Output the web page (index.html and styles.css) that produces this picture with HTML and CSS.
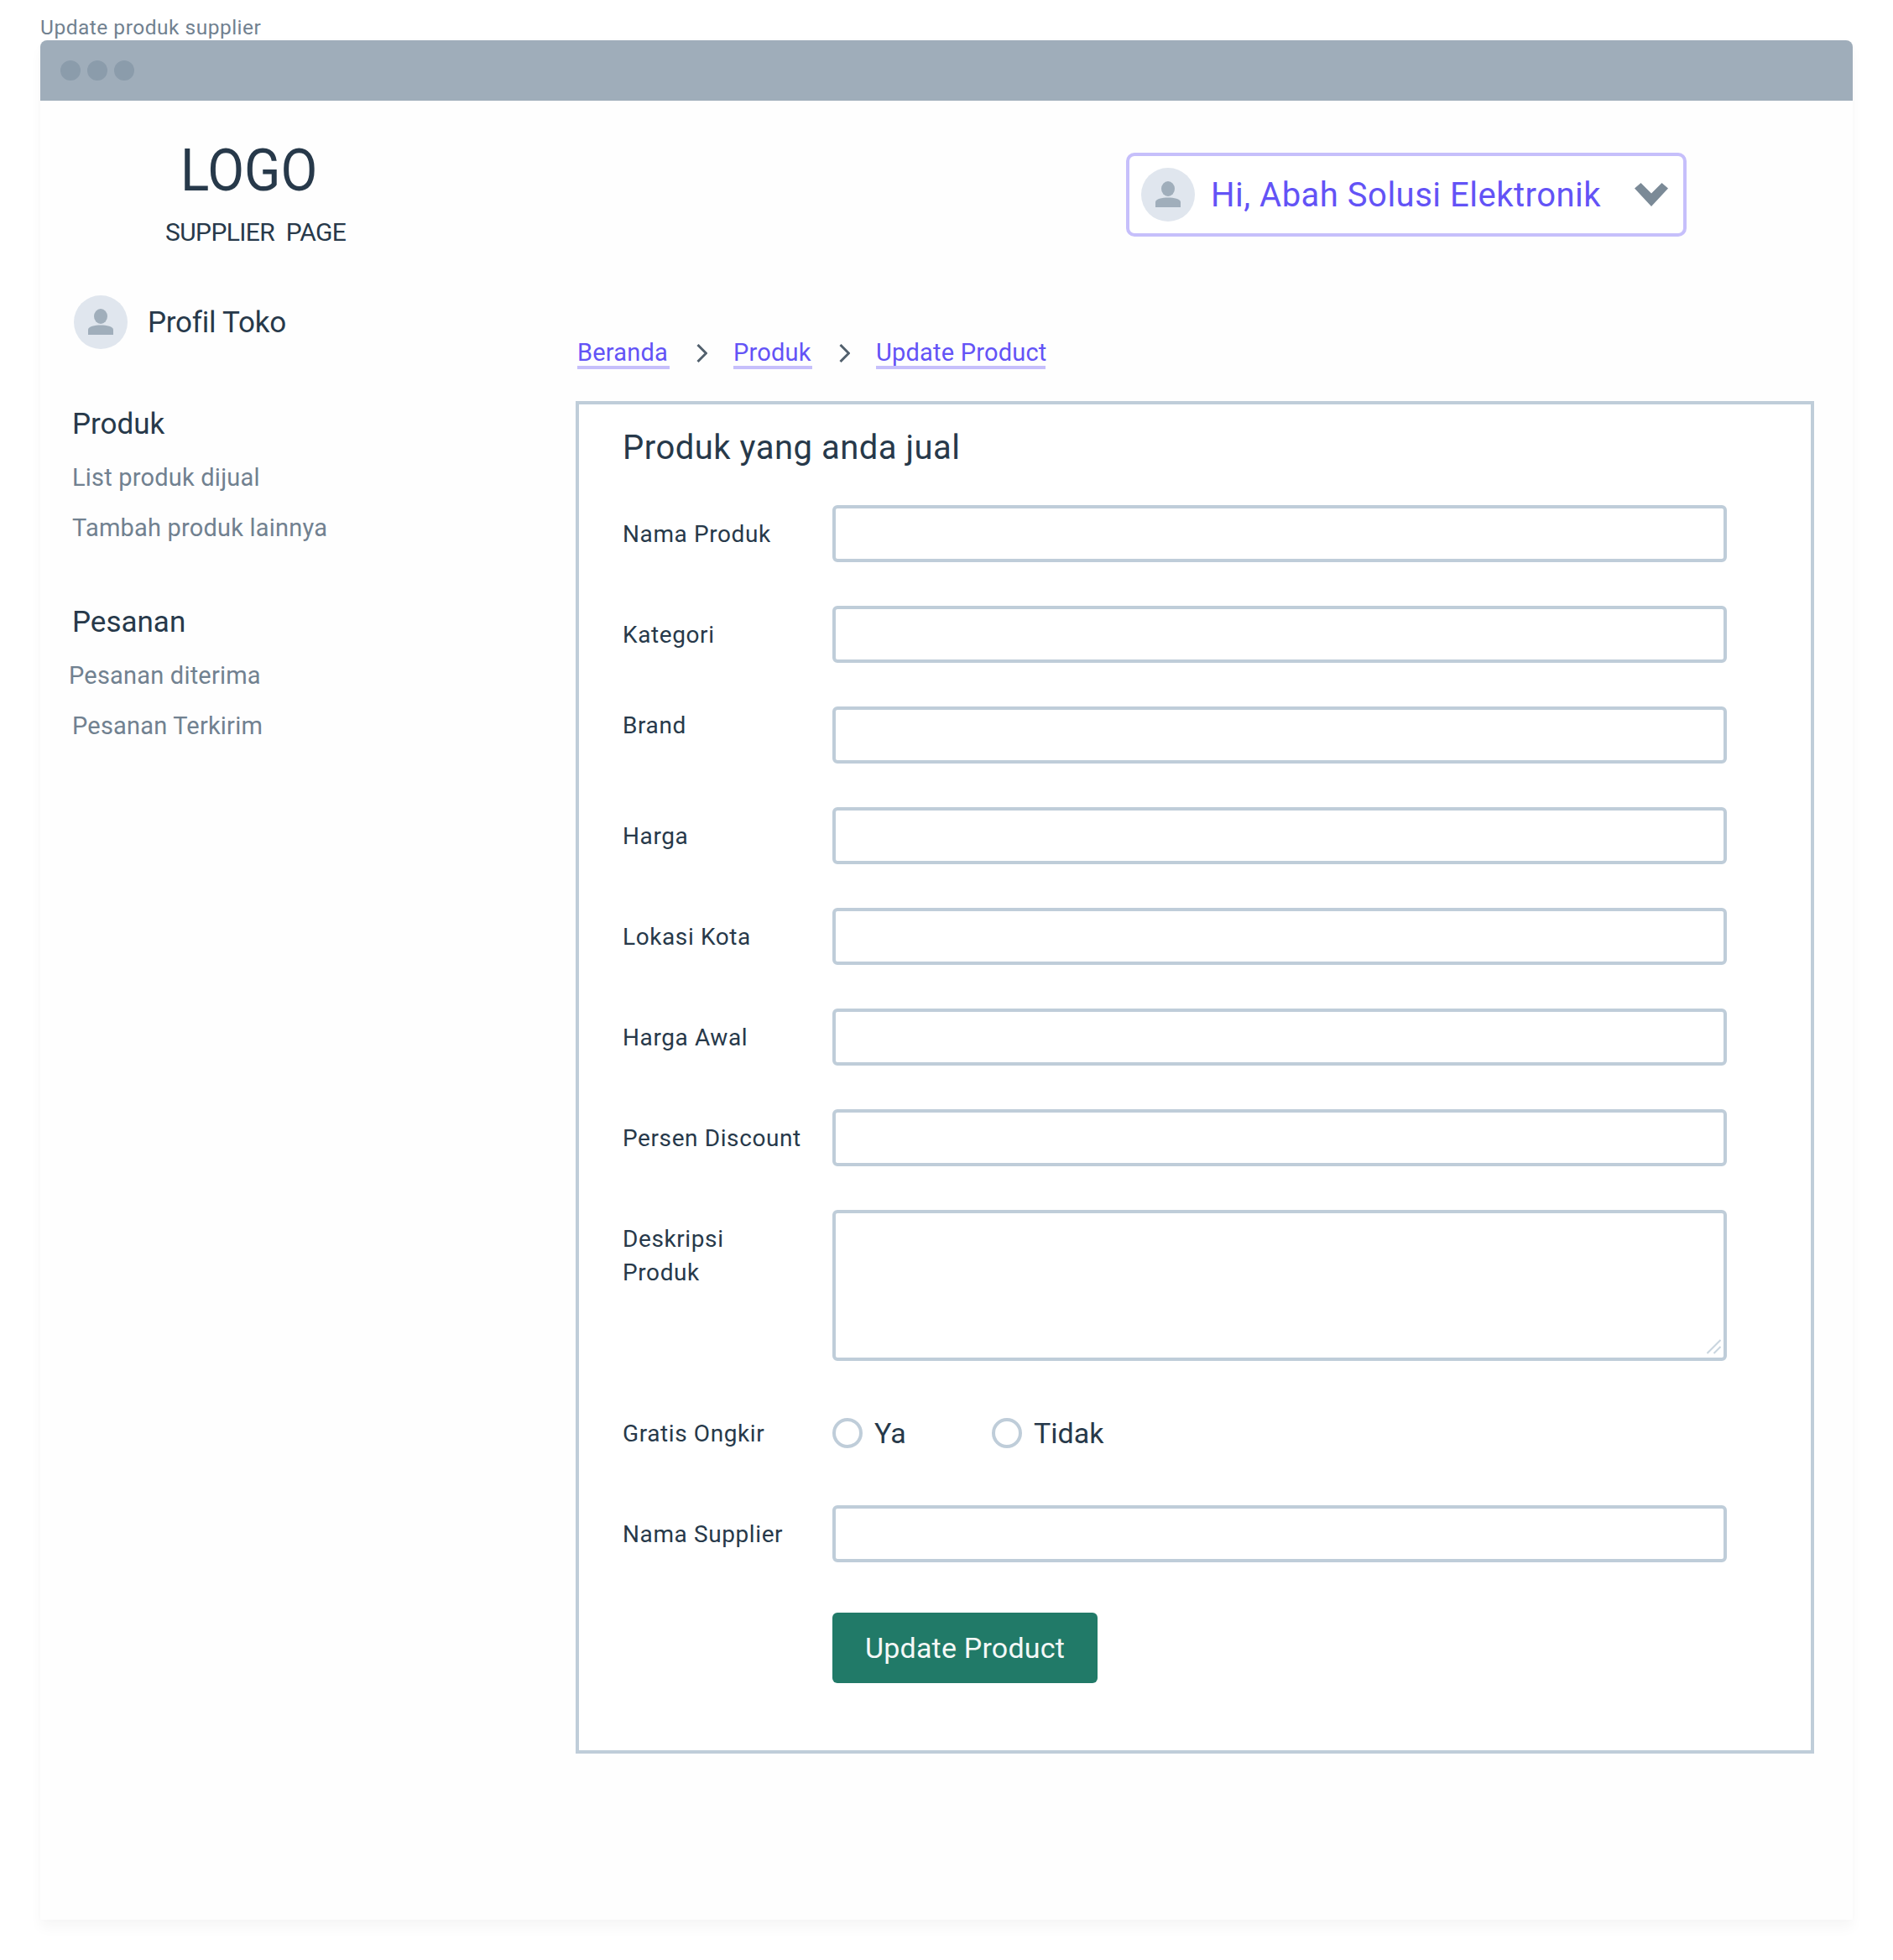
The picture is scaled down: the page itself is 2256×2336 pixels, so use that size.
FILE: index.html
```html
<!DOCTYPE html>
<html lang="id">
<head>
<meta charset="utf-8">
<title>Update produk supplier</title>
<link rel="stylesheet" href="styles.css">
</head>
<body>
<div class="caption">Update produk supplier</div>
<div class="window">
  <div class="titlebar"><span class="dot"></span><span class="dot"></span><span class="dot"></span></div>
  <div class="content">
    <aside class="sidebar">
      <div class="logo">LOGO</div>
      <div class="logo-sub">SUPPLIER&nbsp; PAGE</div>
      <div class="profile">
        <span class="avatar"><svg viewBox="0 0 64 64" width="64" height="64"><ellipse cx="32" cy="25" rx="8" ry="9"/><path d="M17 47v-6c0-4 8-5.500 15-5.500s15 1.500 15 5.500v6z"/></svg></span>
        <span class="profile-name">Profil Toko</span>
      </div>
      <h2 class="nav-title nav-produk">Produk</h2>
      <a class="nav-link">List produk dijual</a>
      <a class="nav-link">Tambah produk lainnya</a>
      <h2 class="nav-title nav-pesanan">Pesanan</h2>
      <a class="nav-link nav-shift">Pesanan diterima</a>
      <a class="nav-link">Pesanan Terkirim</a>
    </aside>
    <main class="main">
      <div class="user-menu">
        <span class="avatar"><svg viewBox="0 0 64 64" width="64" height="64"><ellipse cx="32" cy="25" rx="8" ry="9"/><path d="M17 47v-6c0-4 8-5.500 15-5.500s15 1.500 15 5.500v6z"/></svg></span>
        <span class="user-name">Hi, Abah Solusi Elektronik</span>
        <svg class="user-chevron" viewBox="0 0 40 28" width="40" height="28"><polygon points="7.500,0 20,12.500 32.500,0 40,6.500 20,28 0,6.500"/></svg>
      </div>
      <nav class="crumbs">
        <a class="crumb crumb-a">Beranda</a>
        <svg class="crumb-sep" viewBox="0 0 13 22" width="13" height="22"><path d="M1.500 1l10 10-10 10"/></svg>
        <a class="crumb crumb-b">Produk</a>
        <svg class="crumb-sep" viewBox="0 0 13 22" width="13" height="22"><path d="M1.500 1l10 10-10 10"/></svg>
        <a class="crumb crumb-c">Update Product</a>
      </nav>
      <section class="panel">
        <h1 class="panel-title">Produk yang anda jual</h1>
        <form class="form">
          <div class="row"><label class="label">Nama Produk</label><input class="field" type="text"></div>
          <div class="row"><label class="label">Kategori</label><input class="field" type="text"></div>
          <div class="row"><label class="label label-up">Brand</label><input class="field" type="text"></div>
          <div class="row"><label class="label">Harga</label><input class="field" type="text"></div>
          <div class="row"><label class="label">Lokasi Kota</label><input class="field" type="text"></div>
          <div class="row"><label class="label">Harga Awal</label><input class="field" type="text"></div>
          <div class="row"><label class="label">Persen Discount</label><input class="field" type="text"></div>
          <div class="row row-top">
            <label class="label label-multi">Deskripsi<br>Produk</label>
            <div class="area-wrap">
              <textarea class="area"></textarea>
              <svg class="grip" viewBox="0 0 17 18" width="17" height="18"><path d="M0.500 17L16.500 1M8.500 17l8-8"/></svg>
            </div>
          </div>
          <div class="row">
            <span class="label">Gratis Ongkir</span>
            <label class="radio radio-ya"><input class="radio-dot" type="radio" name="ongkir"><span class="radio-text">Ya</span></label>
            <label class="radio"><input class="radio-dot" type="radio" name="ongkir"><span class="radio-text">Tidak</span></label>
          </div>
          <div class="row"><label class="label">Nama Supplier</label><input class="field" type="text"></div>
          <button class="submit" type="button">Update Product</button>
        </form>
      </section>
    </main>
  </div>
</div>
</body>
</html>
```
FILE: styles.css
```css
* { box-sizing: border-box; }
html, body { margin: 0; background: #fff; }
body {
  width: 2256px;
  height: 2336px;
  overflow: hidden;
  font-family: Roboto, "Liberation Sans", sans-serif;
  color: #27394a;
}
.caption {
  height: 48px;
  padding: 18px 0 0 48px;
  font-size: 24.500px;
  line-height: 30px;
  letter-spacing: 0.5px;
  color: #718190;
}
.window {
  width: 2160px;
  height: 2240px;
  margin-left: 48px;
  background: #fefefe;
  border-radius: 8px 8px 0 0;
  box-shadow: 0 10px 15px rgba(0, 0, 0, 0.035), 0 0 10px rgba(0, 0, 0, 0.015);
}
.titlebar {
  display: flex;
  align-items: center;
  gap: 8px;
  height: 72px;
  padding-left: 24px;
  background: #9fadba;
  border-radius: 8px 8px 0 0;
}
.dot { width: 24px; height: 24px; border-radius: 50%; background: #8b9cab; }
.content { display: flex; }
.sidebar { display: flex; flex-direction: column; align-items: flex-start; width: 638px; flex: none; }
.logo {
  margin: 43px 0 0 167px;
  font-size: 70px;
  line-height: 80px;
  color: #27394a;
  transform: scaleX(0.91);
  transform-origin: left center;
}
.logo-sub {
  margin: 16px 0 0 149px;
  font-size: 30px;
  line-height: 36px;
  letter-spacing: -0.6px;
  color: #27394a;
}
.profile { display: flex; align-items: center; gap: 24px; margin: 57px 0 0 40px; }
.avatar {
  display: block;
  flex: none;
  width: 64px;
  height: 64px;
  border-radius: 50%;
  background: #e0e6ee;
}
.avatar svg { display: block; fill: #a0aebb; }
.profile-name { margin-top: 1px; font-size: 35px; line-height: 44px; letter-spacing: -0.25px; color: #27394a; }
.nav-title { margin: 0 0 0 38px; font-size: 35px; line-height: 44px; font-weight: 400; letter-spacing: 0; color: #27394a; }
.nav-produk { margin-top: 68px; }
.nav-pesanan { margin-top: 72px; }
.nav-link { margin: 22px 0 0 38px; font-size: 29px; line-height: 38px; letter-spacing: 0.2px; color: #718190; }
.nav-shift { margin-left: 34px; }
.main { flex: 1; display: flex; flex-direction: column; align-items: flex-start; }
.user-menu {
  display: flex;
  align-items: center;
  width: 668px;
  height: 100px;
  margin: 62px 0 0 656px;
  padding-left: 14px;
  border: 4px solid #c6bffb;
  border-radius: 10px;
  background: #fff;
}
.user-name { margin: 1px 0 0 19px; font-size: 40px; line-height: 48px; letter-spacing: 0.5px; color: #6353f6; white-space: nowrap; }
.user-chevron { margin-left: auto; margin-right: 18px; fill: #7b8a97; }
.crumbs { display: flex; align-items: center; margin: 115px 0 0 2px; height: 48px; }
.crumb {
  padding-top: 2px;
  font-size: 29px;
  line-height: 32px;
  letter-spacing: 0.2px;
  color: #6353f6;
  border-bottom: 4px solid #c6bffb;
  white-space: nowrap;
}
.crumb-a { width: 110px; }
.crumb-b { width: 94px; }
.crumb-c { width: 202px; }
.crumb-sep { flex: none; margin: 0 31px 0 32px; fill: none; stroke: #52606d; stroke-width: 3; }
.panel {
  width: 1476px;
  height: 1612px;
  margin-top: 33px;
  padding: 27px 0 0 52px;
  border: 4px solid #bfcdd9;
  background: #fff;
}
.panel-title { margin: 0; font-size: 40px; line-height: 50px; font-weight: 400; letter-spacing: 0.5px; color: #27394a; }
.form { display: flex; flex-direction: column; margin-top: 43px; }
.row { display: flex; align-items: center; height: 68px; margin-bottom: 52px; }
.label { flex: none; width: 250px; padding-top: 2px; font-size: 28px; line-height: 40px; letter-spacing: 0.6px; color: #27394a; }
.label-up { margin-top: -24px; }
.label-multi { align-self: flex-start; margin-top: 13px; }
.field, .area {
  display: block;
  width: 1066px;
  border: 4px solid #bfcdd9;
  border-radius: 6px;
  background: #fff;
  outline: none;
  margin: 0;
}
.field { height: 68px; }
.row-top { align-items: flex-start; height: 180px; }
.area-wrap { position: relative; width: 1066px; height: 180px; }
.area { height: 180px; resize: none; }
.grip { position: absolute; right: 7px; bottom: 8px; fill: none; stroke: #c9d5df; stroke-width: 2; }
.radio { display: flex; align-items: center; color: #27394a; }
.radio-ya { width: 190px; }
.radio-dot {
  appearance: none;
  display: block;
  width: 36px;
  height: 36px;
  margin: 0;
  border: 4px solid #bfcdd9;
  border-radius: 50%;
  background: #fff;
}
.radio-text { margin-left: 14px; font-size: 34px; line-height: 44px; letter-spacing: 0; }
.submit {
  width: 316px;
  height: 84px;
  margin: 8px 0 0 250px;
  border: 0;
  border-radius: 6px;
  background: #217a68;
  font-family: inherit;
  font-size: 34px;
  letter-spacing: 0.2px;
  color: #f4f8f7;
}
```
